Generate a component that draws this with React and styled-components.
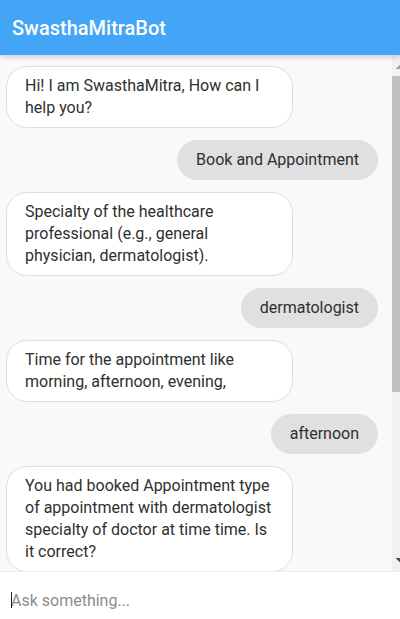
import styled, { createGlobalStyle } from "styled-components";

const messages = [
    { user: false, text: "Hi! I am SwasthaMitra, How can I help you?" },
    { user: true, text: "Book and Appointment" },
    { user: false, text: "Specialty of the healthcare professional (e.g., general physician, dermatologist)." },
    { user: true, text: "dermatologist" },
    { user: false, text: "Time for the appointment like morning, afternoon, evening," },
    { user: true, text: "afternoon" },
    { user: false, text: "You had booked Appointment type of appointment with dermatologist specialty of doctor at time time. Is it correct?" },
    { user: true, text: "yes" },
    { user: false, text: "Your appointment has been booked successfully. You will get a confirmation shortly." },
    { user: false, text: "Is there anything else I can help you with?" },
];

export default function App(){
    return (
        <Wrapper>
            <GlobalStyle/>
            <Header>SwasthaMitraBot</Header>
            <Body>
                <Messages>
                    {messages.map((m, i) => (
                        <Bubble key={i} $user={m.user}>{m.text}</Bubble>
                    ))}
                </Messages>
                <ScrollBar>
                    <Arrow $up/>
                    <Thumb/>
                    <Arrow/>
                </ScrollBar>
            </Body>
            <InputBar>
                <Caret/>
                <Input placeholder="Ask something..."/>
            </InputBar>
        </Wrapper>
    );
}

const GlobalStyle = createGlobalStyle`
    body {
        margin: 0;
        font-family: Roboto, "Noto Sans", sans-serif;
        background: #ffffff;
    }
`;

const Wrapper = styled.div`
    width: 400px;
    height: 619px;
    display: flex;
    flex-direction: column;
    overflow: hidden;
`;

const Header = styled.div`
    position: relative;
    z-index: 2;
    height: 55px;
    flex-shrink: 0;
    display: flex;
    align-items: center;
    padding: 0 12px;
    background: #42a5f5;
    color: #ffffff;
    font-size: 20px;
    font-weight: 500;
    box-shadow: 0 2px 6px rgba(0, 0, 0, 0.18);
`;

const Body = styled.div`
    position: relative;
    flex: 1;
    min-height: 0;
    background: #f9f9f9;
`;

const Messages = styled.div`
    height: 100%;
    box-sizing: border-box;
    overflow-y: auto;
    padding: 11px 22px 14px 6px;
    display: flex;
    flex-direction: column;
    gap: 12px;
    scrollbar-width: none;
`;

const Bubble = styled.div`
    align-self: ${({ $user }) => ($user ? "flex-end" : "flex-start")};
    max-width: 287px;
    box-sizing: border-box;
    padding: 8px 18px;
    border: 1px solid ${({ $user }) => ($user ? "#e0e0e0" : "#dedede")};
    border-radius: 21px;
    background: ${({ $user }) => ($user ? "#e0e0e0" : "#ffffff")};
    color: #2f2f2f;
    font-size: 16px;
    line-height: 22px;
    flex-shrink: 0;
`;

const ScrollBar = styled.div`
    position: absolute;
    top: 0;
    right: 0;
    bottom: 0;
    width: 8px;
    background: #f1f1f1;
    display: flex;
    flex-direction: column;
    justify-content: space-between;
`;

const Arrow = styled.div`
    height: 21px;
    display: flex;
    justify-content: flex-end;
    align-items: ${({ $up }) => ($up ? "flex-start" : "flex-end")};

    &::after {
        content: "";
        width: 5px;
        height: 4px;
        margin: ${({ $up }) => ($up ? "10px 0 0" : "0 0 9px")};
        background: ${({ $up }) =>
            $up
                ? "linear-gradient(to top left, #a3a3a3 50%, transparent 50%)"
                : "linear-gradient(to bottom left, #505050 50%, transparent 50%)"};
    }
`;

const Thumb = styled.div`
    height: 316px;
    background: #c1c1c1;
    margin-bottom: auto;
`;

const InputBar = styled.div`
    position: relative;
    flex-shrink: 0;
    border-top: 1px solid #eeeeee;
    background: #ffffff;
`;

const Caret = styled.span`
    position: absolute;
    left: 11px;
    top: 20px;
    width: 1px;
    height: 16px;
    background: #222222;
`;

const Input = styled.input`
    display: block;
    width: 100%;
    box-sizing: border-box;
    height: 47px;
    border: 0;
    outline: none;
    padding: 10px 11px 0;
    font-family: Roboto, "Noto Sans", sans-serif;
    font-size: 16px;
    color: #333333;
    background: transparent;

    &::placeholder {
        color: #8c8c8c;
    }
`;
